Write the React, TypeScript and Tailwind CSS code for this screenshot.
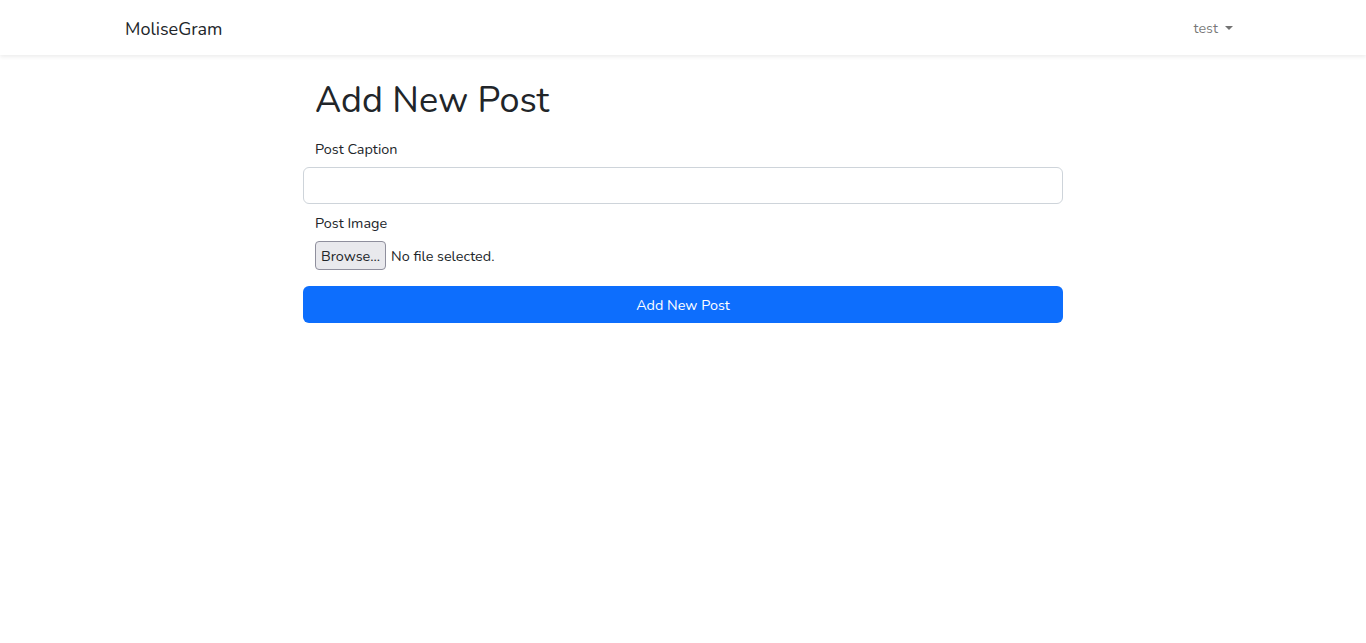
export default function App() {
  return (
    <div className="min-h-screen bg-white text-[#212529] font-['Nunito','Noto_Sans',sans-serif] text-[14.4px] leading-[1.6]">
      <nav className="bg-white shadow-[0_2px_4px_rgba(0,0,0,0.075)]">
        <div className="mx-auto flex h-[55px] w-[1140px] items-center justify-between px-3 pt-[2px]">
          <a className="text-[18px] leading-[30px] text-[#212529]">MoliseGram</a>
          <button className="flex items-center px-2 text-[14.4px] text-[rgba(0,0,0,0.55)]">
            test
            <span className="ml-[7px] inline-block border-x-[4px] border-t-[4px] border-x-transparent border-t-[rgba(0,0,0,0.55)]" />
          </button>
        </div>
      </nav>

      <main className="mx-auto w-[760px] pt-[24px]">
        <h1 className="px-3 text-[36px] leading-[43px] font-normal">Add New Post</h1>

        <form className="mt-[15px]">
          <label className="block px-3 pt-[1px] leading-[23px]">Post Caption</label>
          <input
            type="text"
            className="mt-[6px] block h-[37px] w-full rounded-[6px] border border-[#ced4da] px-3 outline-none"
          />

          <label className="mt-[7px] block px-3 pt-[1px] leading-[23px]">Post Image</label>
          <div className="mt-[6px] flex h-[29px] items-center gap-[5px] px-3">
            <span className="inline-flex h-[29px] items-center rounded-[4px] border border-[#8f8f9d] bg-[#e9e9ed] px-[5px] pt-[2px] text-[14.4px]">
              Browse...
            </span>
            <span className="pt-[2px]">No file selected.</span>
          </div>

          <button
            type="button"
            className="mt-[16px] block h-[37px] w-full rounded-[6px] bg-[#0d6efd] pt-[2px] text-white"
          >
            Add New Post
          </button>
        </form>
      </main>
    </div>
  )
}
